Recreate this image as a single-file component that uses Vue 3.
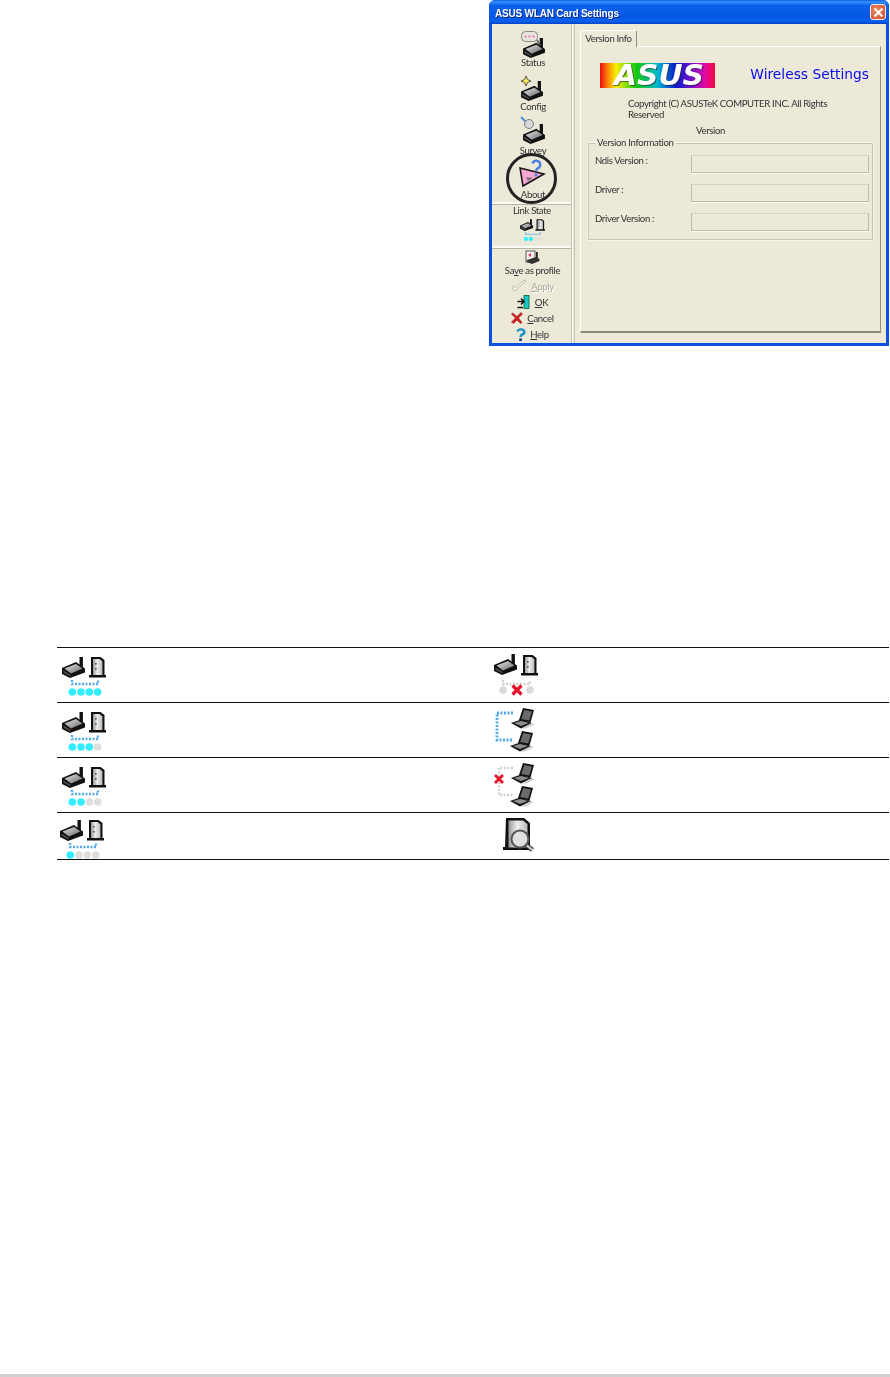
<script setup>
const navItems = [
  { label: 'Status', icon: 'status' },
  { label: 'Config', icon: 'config' },
  { label: 'Survey', icon: 'survey' },
  { label: 'About', icon: 'about' },
];

const rows = [
  { level: 4, right: 'none', last: false },
  { level: 3, right: 'adhoc', last: false },
  { level: 2, right: 'adhocDown', last: false },
  { level: 1, right: 'search', last: true },
];

const dotX = [12.3, 21, 29.3, 37.7];
</script>

<template>
  <div class="page">
    <!-- shared icon parts -->
    <svg class="defs" width="0" height="0">
      <defs>
        <linearGradient id="gTop" x1="0" y1="0" x2="1" y2="1">
          <stop offset="0" stop-color="#e8e8e8" />
          <stop offset="1" stop-color="#666" />
        </linearGradient>
        <linearGradient id="gTower" x1="0" y1="0" x2="1" y2="0">
          <stop offset="0" stop-color="#999" />
          <stop offset="0.45" stop-color="#eee" />
          <stop offset="1" stop-color="#bbb" />
        </linearGradient>
        <linearGradient id="gRainbow" x1="0" y1="0" x2="1" y2="0">
          <stop offset="0" stop-color="#ee0a14" />
          <stop offset="0.07" stop-color="#fb8a06" />
          <stop offset="0.14" stop-color="#f7f000" />
          <stop offset="0.32" stop-color="#10c810" />
          <stop offset="0.5" stop-color="#00b8d0" />
          <stop offset="0.66" stop-color="#0818c8" />
          <stop offset="0.82" stop-color="#8a10c8" />
          <stop offset="0.92" stop-color="#e808a0" />
          <stop offset="1" stop-color="#f00838" />
        </linearGradient>
        <symbol id="router" viewBox="0 0 23 21" overflow="visible">
          <rect x="17.500" y="0" width="3.400" height="13" fill="#111" />
          <polygon points="0,11 14,5 23,11.500 23,15.500 8,21 0,17" fill="#111" />
          <polygon points="2.500,11.500 14,7 20.500,11.500 9,16.500" fill="url(#gTop)" />
          <polygon points="1.500,13.500 8.500,18 8.500,19.500 1.500,15.500" fill="#555" />
        </symbol>
        <symbol id="server" viewBox="0 0 17 20" overflow="visible">
          <path d="M2 0H11.500L15.500 3V18H17V20.500H0V18H2Z" fill="#111" />
          <path d="M4 2H10.500L13.400 4.200V18H4Z" fill="url(#gTower)" />
          <rect x="6" y="6" width="1.600" height="1.600" fill="#555" />
          <rect x="6" y="11" width="1.600" height="1.600" fill="#555" />
        </symbol>
        <symbol id="laptop" viewBox="0 0 24 20" overflow="visible">
          <polygon points="12,0 23,2 19.500,14.500 8,12" fill="#111" />
          <polygon points="13.200,2 21,3.400 18.200,12.500 10.200,11" fill="#6a6a6a" />
          <polygon points="0,15 10,11.500 21,15 10,20.500" fill="#161616" />
          <polygon points="3,15 10,13 18,15 10,18" fill="#8d8d8d" />
          <polygon points="11,20.500 21,15.500 24,16 15,20.500" fill="#c9c9c9" />
        </symbol>
      </defs>
    </svg>

    <div class="top">
      <div class="win">
        <div class="titlebar">
          <span class="title">ASUS WLAN Card Settings</span>
          <span class="close">
            <svg width="11" height="11" viewBox="0 0 11 11">
              <path d="M1.500 1.500L9.500 9.500M9.500 1.500L1.500 9.500" stroke="#fff" stroke-width="2" />
            </svg>
          </span>
        </div>
        <div class="winbody">
          <div class="side">
            <div class="nav">
              <div v-for="item in navItems" :key="item.label" class="navitem">
                <svg class="navicon" width="40" height="32" viewBox="0 0 40 32">
                  <template v-if="item.icon === 'status'">
                    <use href="#router" x="10" y="12" width="22" height="20" />
                    <path d="M24 14L27 19" stroke="#555" stroke-width="1.500" />
                    <rect x="8.500" y="5.500" width="16" height="10" rx="4" fill="#e6e4dc" stroke="#8a8a8a" />
                    <circle cx="12.500" cy="10.500" r="1.100" fill="#f070b0" />
                    <circle cx="16.500" cy="10.500" r="1.100" fill="#f070b0" />
                    <circle cx="20.500" cy="10.500" r="1.100" fill="#f070b0" />
                  </template>
                  <template v-else-if="item.icon === 'config'">
                    <use href="#router" x="8" y="11" width="22" height="20" />
                    <path d="M13 6L14.500 9.500L18 11L14.500 12.500L13 16L11.500 12.500L8 11L11.500 9.500Z" fill="#f6e860" stroke="#333" stroke-width="0.800" />
                  </template>
                  <template v-else-if="item.icon === 'survey'">
                    <use href="#router" x="10" y="10" width="22" height="20" />
                    <path d="M8 3L13 8" stroke="#4a90d8" stroke-width="2" />
                    <circle cx="16" cy="10" r="4.500" fill="#d8d8d8" stroke="#777" />
                  </template>
                  <template v-else>
                    <polygon points="7,10 31,16 10,28" fill="#f5a6d2" stroke="#111" stroke-width="1.500" />
                    <path d="M13 19L20 20L15 23Z" fill="#777" />
                    <path d="M19.500 5.500a4 4 0 1 1 5 5q-1.500 1-1.500 3" fill="none" stroke="#4a7fe0" stroke-width="2.500" />
                    <circle cx="23" cy="17" r="1.500" fill="#4a7fe0" />
                  </template>
                </svg>
                <span class="navlabel">{{ item.label }}</span>
              </div>
              <div class="ring"></div>
            </div>

            <div class="linkstate">
              <span class="navlabel">Link State</span>
              <svg width="26" height="25" viewBox="0 0 46 44">
                <use href="#router" x="2" y="2" width="23" height="21" />
                <use href="#server" x="29" y="2" width="17" height="20" />
                <path d="M12 25V29H38V25" class="dots" />
                <circle v-for="(x, i) in dotX" :key="x" :cx="x" cy="37" r="3.800" :fill="i < 2 ? '#33eeff' : '#e3e1d6'" />
              </svg>
            </div>

            <div class="actions">
              <svg class="saveicon" width="15" height="14" viewBox="0 0 15 14">
                <rect x="1" y="1" width="9" height="11" fill="#f4f0f0" stroke="#555" />
                <path d="M3 5L6 3V7Z" fill="#f03070" />
                <rect x="11" y="2" width="1.800" height="7" fill="#222" />
                <polygon points="2,10 11,7 14.500,9 14.500,11 7,14 2,12" fill="#333" />
              </svg>
              <div class="savelabel">Sa<u>v</u>e as profile</div>
              <div class="action off">
                <svg width="16" height="14" viewBox="0 0 16 14">
                  <path d="M1 9L4 12L15 2L13 1L4.500 8.500L2.500 7Z" fill="#f5f3ea" stroke="#bdbaa8" />
                </svg>
                <span><u>A</u>pply</span>
              </div>
              <div class="action">
                <svg width="14" height="14" viewBox="0 0 14 14">
                  <rect x="7" y="0.500" width="5" height="13" fill="#18c8c8" stroke="#063" stroke-width="0.800" />
                  <path d="M0.500 6.500H7M4 3.500L7 6.500L4 9.500M0.500 12.500H6" fill="none" stroke="#111" stroke-width="1.500" />
                </svg>
                <span><u>O</u>K</span>
              </div>
              <div class="action">
                <svg width="12" height="12" viewBox="0 0 12 12">
                  <path d="M1.500 1L6 4.500L10 0.500L11.500 2L7.500 6L11 10.500L9.500 11.500L6 8L2.500 11.500L0.500 10L4.500 6L0.500 2Z" fill="#d81818" stroke="#801010" stroke-width="0.500" />
                </svg>
                <span><u>C</u>ancel</span>
              </div>
              <div class="action">
                <svg width="10" height="13" viewBox="0 0 11 15">
                  <path d="M1.500 4a4 3 0 1 1 5 3.500q-1.500 1-1.500 3" fill="none" stroke="#1890c8" stroke-width="2.800" />
                  <rect x="3.500" y="12" width="3" height="3" fill="#123a78" />
                </svg>
                <span><u>H</u>elp</span>
              </div>
            </div>
          </div>

          <div class="main">
            <div class="tab">Version Info</div>
            <div class="panel">
              <div class="brand">
                <div class="logo">
                  <svg width="115" height="25" viewBox="0 0 115 25">
                    <rect width="115" height="25" fill="url(#gRainbow)" />
                    <text x="15" y="23" class="logotext shadow" textLength="90" lengthAdjust="spacingAndGlyphs">ASUS</text>
                    <text x="14" y="22" class="logotext" textLength="90" lengthAdjust="spacingAndGlyphs">ASUS</text>
                  </svg>
                </div>
                <div class="product">Wireless Settings</div>
              </div>
              <p class="copy">Copyright (C) ASUSTeK COMPUTER INC. All Rights<br />Reserved</p>
              <div class="ver">Version</div>
              <fieldset class="group">
                <legend>Version Information</legend>
                <div class="frow"><label>Ndis Version :</label><div class="field"></div></div>
                <div class="frow"><label>Driver :</label><div class="field"></div></div>
                <div class="frow"><label>Driver Version :</label><div class="field"></div></div>
              </fieldset>
            </div>
          </div>
        </div>
      </div>
    </div>

    <table class="legend-table">
      <tbody>
        <tr v-for="row in rows" :key="row.level" :class="{ last: row.last }">
          <td class="c1">
            <svg class="cellicon" width="46" height="44" viewBox="0 0 46 44">
              <use href="#router" x="2" y="2" width="23" height="21" />
              <use href="#server" x="29" y="2" width="17" height="20" />
              <path d="M12 25V29H38V25" class="dots" />
              <circle v-for="(x, i) in dotX" :key="x" :cx="x" cy="37" r="3.800" :fill="i < row.level ? '#33eeff' : '#dedede'" />
            </svg>
          </td>
          <td class="c2">
            <svg class="cellicon" width="46" height="44" viewBox="0 0 46 44">
              <template v-if="row.right === 'none'">
                <use href="#router" x="1" y="-1" width="23" height="21" />
                <use href="#server" x="28" y="0" width="17" height="20" />
                <path d="M10 25V29H37V25" class="dots grey" />
                <circle cx="10" cy="35" r="3.800" fill="#dadada" />
                <circle cx="37" cy="35" r="3.800" fill="#dadada" />
                <path d="M19.500 30.500L28.500 39.500M28.500 30.500L19.500 39.500" stroke="#e8102a" stroke-width="3.200" />
              </template>
              <template v-else-if="row.right === 'search'">
                <path d="M13 0H31L37 5V32H10V29H12Z" fill="#111" />
                <path d="M15.500 2.500H30L34.500 6V29.500H15.500Z" fill="url(#gTower)" />
                <path d="M32 26L39.500 32" stroke="#222" stroke-width="4.500" />
                <path d="M32 26L39.500 32" stroke="#c4c4c4" stroke-width="2.500" />
                <circle cx="27" cy="21" r="8.500" fill="#e2e2e2" fill-opacity="0.850" stroke="#555" stroke-width="2" />
              </template>
              <template v-else>
                <use href="#laptop" x="18" y="-2" width="24" height="20" />
                <use href="#laptop" x="17" y="21" width="24" height="20" />
                <template v-if="row.right === 'adhoc'">
                  <path d="M20 3H4V30H20" class="dots wide" />
                </template>
                <template v-else>
                  <path d="M20 3H6V30H20" class="dots grey" />
                  <path d="M2 10L10 18M10 10L2 18" stroke="#e8102a" stroke-width="2.800" />
                </template>
              </template>
            </svg>
          </td>
        </tr>
      </tbody>
    </table>

    <div class="footbar"></div>
  </div>
</template>

<style scoped>
.page {
  height: 1377px;
  display: flex;
  flex-direction: column;
  overflow: hidden;
  font-family: "Liberation Sans", Arial, sans-serif;
}
.defs {
  position: absolute;
}
.top {
  display: flex;
  justify-content: flex-end;
  padding-right: 1px;
}
.win {
  width: 400px;
  height: 346px;
  box-sizing: border-box;
  display: flex;
  flex-direction: column;
  background: #0a50e0;
  border-radius: 6px 6px 0 0;
  padding: 0 3px 3px;
  filter: blur(0.4px);
  color: #333;
  font-family: Lato, "Liberation Sans", Arial, sans-serif;
  font-size: 9.600px;
  letter-spacing: -0.35px;
  white-space: nowrap;
}
.titlebar {
  height: 24px;
  flex: none;
  margin: 0 -3px;
  padding: 0 3px 0 6px;
  display: flex;
  align-items: center;
  justify-content: space-between;
  border-radius: 6px 6px 0 0;
  background: linear-gradient(#0a5ee6 0, #3a90fa 8%, #0a62ea 22%, #0556e4 70%, #0a62ec 88%, #0042c8 100%);
}
.title {
  color: #fff;
  font-family: "Liberation Sans", Arial, sans-serif;
  font-weight: 700;
  font-size: 10px;
  letter-spacing: -0.2px;
  text-shadow: 1px 1px 0 #0a2a90;
  padding-top: 2px;
}
.close {
  width: 16px;
  height: 16px;
  box-sizing: border-box;
  display: flex;
  align-items: center;
  justify-content: center;
  background: radial-gradient(circle at 40% 40%, #ee8a66, #d24a22);
  border: 1px solid #f2ece4;
  border-radius: 3px;
}
.winbody {
  flex: 1;
  display: flex;
  background: #ece9d8;
  min-height: 0;
}
.side {
  width: 79px;
  flex: none;
  border-right: 1px solid #c4c1b0;
  box-shadow: 1px 0 0 #fff;
  display: flex;
  flex-direction: column;
  padding-top: 2px;
}
.nav {
  position: relative;
  border-bottom: 2px solid #fbfaf5;
  box-shadow: 0 1px 0 #b8b5a4;
}
.navitem {
  height: 44px;
  padding-left: 3px;
  display: flex;
  flex-direction: column;
  align-items: center;
}
.navicon {
  display: block;
  flex: none;
}
.navlabel {
  display: block;
  line-height: 12px;
  margin-top: -1px;
  text-align: center;
}
.ring {
  position: absolute;
  left: 14px;
  top: 127px;
  width: 51px;
  height: 51px;
  box-sizing: border-box;
  border: 3px solid #222;
  border-radius: 50%;
}
.linkstate {
  height: 44px;
  display: flex;
  flex-direction: column;
  align-items: center;
  padding: 2px 0 0 1px;
  box-sizing: border-box;
  border-bottom: 2px solid #fbfaf5;
  box-shadow: 0 1px 0 #b8b5a4;
}
.linkstate svg {
  margin-top: 1px;
}
.actions {
  display: flex;
  flex-direction: column;
  align-items: center;
  padding: 2px 0 0 2px;
}
.saveicon {
  display: block;
}
.savelabel {
  line-height: 12px;
  margin-top: 1px;
  margin-bottom: 1px;
}
.action {
  height: 16px;
  display: flex;
  align-items: center;
  gap: 4px;
}
.action.off {
  color: #aca899;
  text-shadow: 1px 1px 0 #fff;
}
.main {
  flex: 1;
  padding: 6px 5px 0 5px;
  min-width: 0;
  border-left: 1px solid #c4c1b0;
  margin-left: 2px;
}
.tab {
  width: 57px;
  height: 17px;
  box-sizing: border-box;
  line-height: 15px;
  text-align: center;
  border: 1px solid #fff;
  border-right-color: #8f8d7c;
  border-bottom: none;
  border-radius: 2px 2px 0 0;
  margin-bottom: -1px;
  position: relative;
  background: #ece9d8;
}
.panel {
  height: 287px;
  box-sizing: border-box;
  border: 1px solid #fff;
  border-right-color: #8f8d7c;
  border-bottom: 2px solid #8a8978;
}
.brand {
  display: flex;
  align-items: center;
  justify-content: space-between;
  padding: 16px 11px 0 19px;
}
.logo {
  width: 115px;
  height: 25px;
}
.logo svg {
  display: block;
  overflow: visible;
}
.logotext {
  font-family: "DejaVu Sans", sans-serif;
  font-style: italic;
  font-weight: 700;
  font-size: 29px;
  letter-spacing: 0;
  fill: #fff;
}
.logotext.shadow {
  fill: #20203a;
  opacity: 0.6;
}
.product {
  font-family: "DejaVu Sans", sans-serif;
  font-size: 13.800px;
  letter-spacing: 0;
  color: #0a0af0;
  margin-bottom: 3px;
}
.copy {
  margin: 10px 0 0 47px;
  line-height: 11px;
}
.ver {
  margin: 5px 0 0 115px;
  line-height: 12px;
}
.group {
  margin: 0 7px;
  padding: 6px 3px 0 6px;
  height: 103px;
  box-sizing: border-box;
  border: 1px solid #c6c3b2;
  box-shadow: 0 0 0 1px #f6f5ee;
  min-width: 0;
}
.group legend {
  padding: 0 2px;
  margin-left: 0;
  line-height: 12px;
}
.frow {
  display: flex;
  align-items: flex-start;
  height: 18px;
  margin-bottom: 11px;
}
.frow label {
  width: 96px;
  flex: none;
  line-height: 12px;
}
.field {
  width: 179px;
  height: 18px;
  box-sizing: border-box;
  border: 1px solid #bebbaa;
  border-top-color: #d4d1c0;
  box-shadow: 0 1px 0 #fafaf4;
}
.legend-table {
  margin: 301px 1px 0 57px;
  width: 832px;
  border-collapse: collapse;
  table-layout: fixed;
}
.legend-table tr {
  height: 55px;
}
.legend-table tr.last {
  height: 47px;
}
.legend-table td {
  padding: 4px 0 0;
  border-top: 1px solid #111;
  border-bottom: 1px solid #111;
  vertical-align: top;
}
.c1 {
  width: 433px;
  padding-left: 3px !important;
}
.last .c1 {
  padding-left: 1px !important;
}
.cellicon {
  display: block;
  overflow: visible;
  margin-top: 3px;
  filter: blur(0.4px);
}
.last .cellicon {
  margin-top: 1px;
  margin-bottom: -3px;
}
.dots {
  fill: none;
  stroke: #55aaee;
  stroke-width: 2.300;
  stroke-dasharray: 2 1.500;
}
.dots.grey {
  stroke: #cfcfcf;
}
.dots.wide {
  stroke-width: 2.800;
}
.footbar {
  margin-top: auto;
  height: 3px;
  background: #d0d0d0;
}
</style>

<style>
html, body {
  margin: 0;
  background: #fff;
}
</style>
